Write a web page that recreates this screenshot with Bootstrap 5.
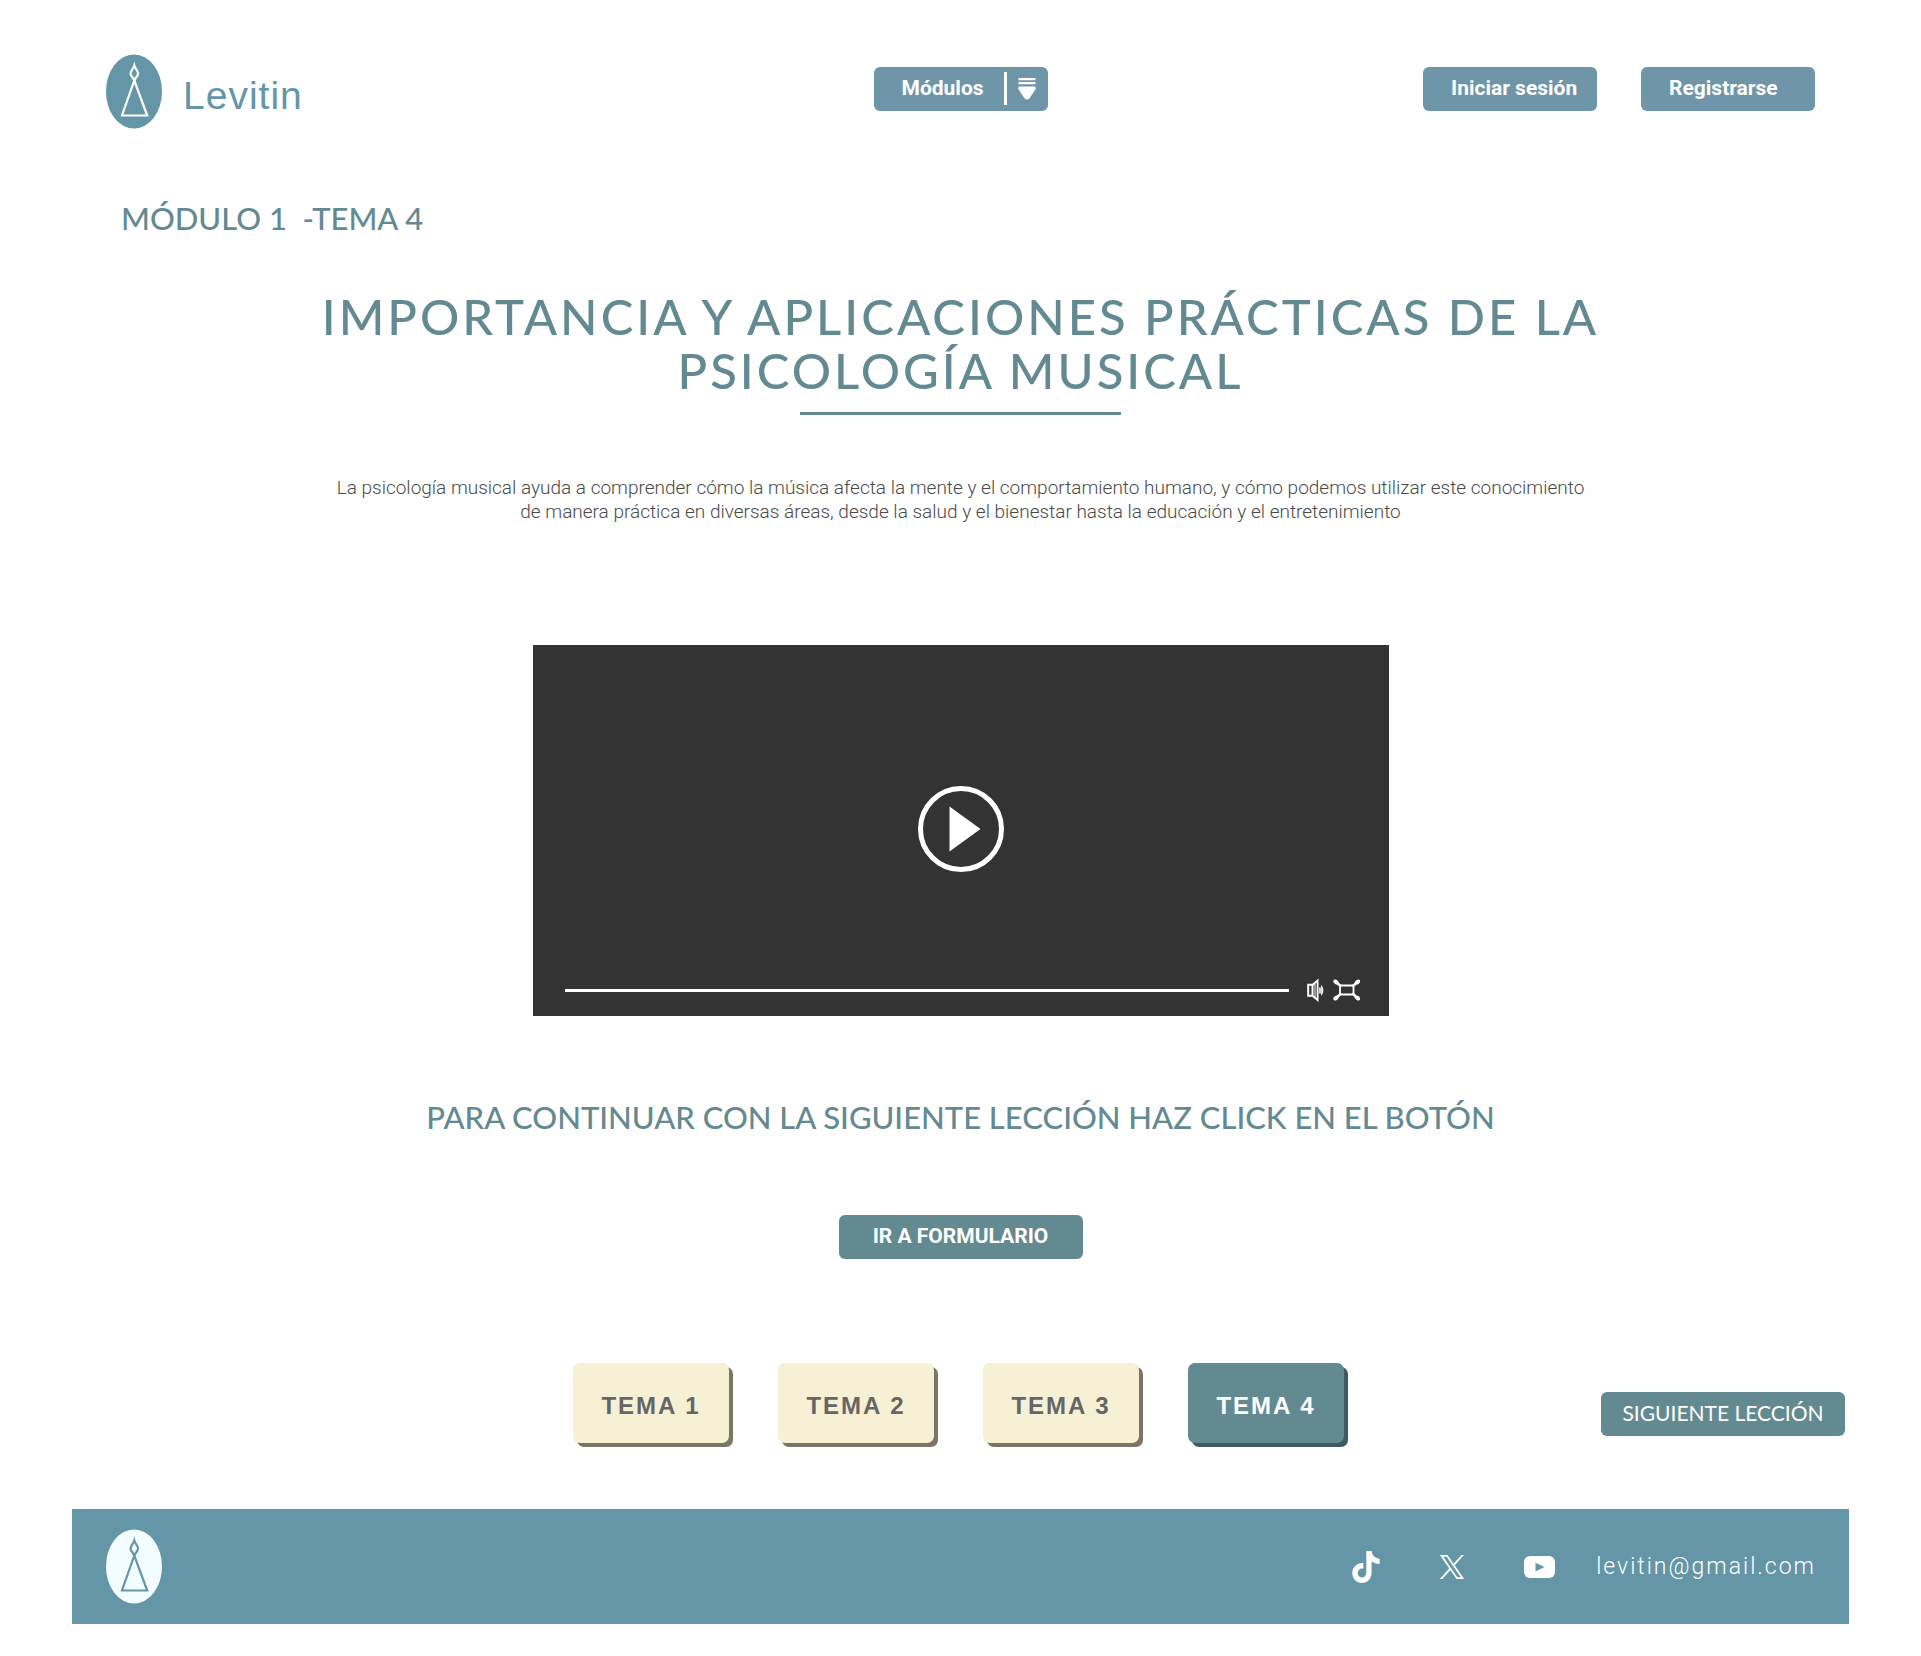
<!DOCTYPE html>
<html lang="es">
<head>
<meta charset="utf-8">
<meta name="viewport" content="width=device-width, initial-scale=1">
<title>Levitin</title>
<link href="https://cdn.jsdelivr.net/npm/bootstrap@5.3.0/dist/css/bootstrap.min.css" rel="stylesheet">
<style>
  :root { --teal: #648a91; --sky: #6496a8; --steel: #6e95a8; --cream: #f6f0d4; }
  body { background: #fefefe; font-family: Roboto, "Liberation Sans", sans-serif; font-size: 20px; line-height: 24px; color: #4a4a4a; }
  .site-head { display: grid; grid-template-columns: 1fr auto 1fr; align-items: center; padding: 54px 106px 0; }
  .logo-mark { width: 56px; height: 75px; flex: none; }
  .brand-name { font-family: "Liberation Sans", sans-serif; font-size: 39px; line-height: 48px; letter-spacing: 1px; color: var(--sky); padding-top: 8px; }
  .brand-link { gap: 21px; }
  .btn-site { --bs-btn-color: #fff; --bs-btn-hover-color: #fff; --bs-btn-bg: var(--steel); --bs-btn-hover-bg: #5e8699; --bs-btn-border-width: 0; --bs-btn-border-radius: 6px; --bs-btn-font-weight: 700; --bs-btn-font-size: 21px; --bs-btn-line-height: 24px; --bs-btn-padding-x: 0; --bs-btn-padding-y: 0; width: 174px; height: 44px; margin-bottom: 5px; padding-bottom: 2px; }
  .btn-head { padding-left: 28px; text-align: left; }
  .btn-teal { --bs-btn-bg: var(--teal); --bs-btn-hover-bg: #54797f; width: 244px; margin: 0; }
  .split-bar { width: 3px; height: 33px; background: #fff; margin: 0 8px 0 20px; }
  .geo { font-family: Lato, sans-serif; color: var(--teal); }
  .crumb { font-size: 31px; line-height: 40px; font-weight: 500; padding: 69px 121px 0; margin: 0; }
  .lesson-title { font-size: 49px; line-height: 54px; font-weight: 500; letter-spacing: 3px; max-width: 1400px; margin: 51px auto 0; }
  .title-rule { width: 321px; height: 3px; background: var(--teal); margin: 15px auto 0; }
  .intro { max-width: 1260px; margin: 61px auto 0; font-size: 19px; font-weight: 300; }
  .player { width: 856px; max-width: 100%; height: 371px; margin: 121px auto 0; background: #333; padding: 0 29px 14px 32px; }
  .stage { padding-top: 35px; }
  .play-btn { border: 0; background: none; padding: 0; margin-right: 3px; }
  .seek { appearance: none; flex: 1; min-width: 0; height: 3px; background: #fff; margin: 0 18px 0 0; }
  .seek::-webkit-slider-thumb { appearance: none; width: 3px; height: 3px; background: #fff; }
  .icon-btn { border: 0; background: none; padding: 0; display: flex; }
  .hint { font-size: 31px; line-height: 40px; font-weight: 500; margin: 81px 0 0; }
  .form-link { margin-top: 78px; }
  .topics { display: grid; grid-template-columns: 1fr auto 1fr; align-items: center; padding: 0 76px 0 72px; margin-top: 104px; }
  .topic-nav { gap: 49px; }
  .topic { width: 156px; height: 80px; border-radius: 7px; background: var(--cream); color: #666; box-shadow: 4px 4px 0 #7d7564; font-family: "Liberation Sans", sans-serif; font-size: 24px; font-weight: 700; letter-spacing: 2px; padding-top: 6px; text-decoration: none; }
  .topic.current { background: var(--teal); color: #fff; box-shadow: 4px 4px 0 #3f5a62; }
  .btn-next { --bs-btn-font-weight: 400; --bs-btn-font-size: 21px; font-family: Lato, sans-serif; margin-top: 22px; }
  .site-foot { background: var(--sky); margin: 66px 72px 0; height: 115px; padding: 0 33px 0 34px; }
  .social { gap: 60px; margin-right: 41px; }
  .mail { color: #fff; font-size: 23px; font-weight: 300; letter-spacing: 2px; text-decoration: none; }
</style>
</head>
<body>
<svg class="d-none" aria-hidden="true">
  <symbol id="candle" viewBox="0 0 56 75">
    <g fill="none" stroke="currentColor" stroke-width="2.2">
      <path d="M28.300 26.500 16 61.500H41.200Z"/>
      <path d="M28.300 11.500C27.500 14.500 24.500 17 24.500 19.500S28.300 25 28.300 27C28.300 25 32.100 22 32.100 19.500S29.100 14.500 28.300 11.500Z"/>
    </g>
  </symbol>
</svg>

<header class="site-head">
  <a href="#" class="brand-link d-flex align-items-center text-decoration-none">
    <svg class="logo-mark" viewBox="0 0 56 75" color="#fff" role="img" aria-label="Logo Levitin"><ellipse cx="28" cy="37.500" rx="28" ry="37" fill="#6496a8"/><use href="#candle"/></svg>
    <span class="brand-name">Levitin</span>
  </a>
  <button type="button" class="btn btn-site btn-head d-flex align-items-center">
    <span>Módulos</span>
    <span class="split-bar"></span>
    <svg width="24" height="24" viewBox="0 0 24 24" fill="#fff" aria-hidden="true"><path d="M3.500 2h17v2.200h-17zM3.500 6h17v2.200h-17zM4 10.400h16l1 2-6.500 9.800q-2.500 2.600-5 0L3 12.400z"/></svg>
  </button>
  <nav class="d-flex justify-content-end gap-4" aria-label="Cuenta">
    <button type="button" class="btn btn-site btn-head me-3">Iniciar sesión</button>
    <button type="button" class="btn btn-site btn-head ms-1">Registrarse</button>
  </nav>
</header>

<main>
  <p class="geo crumb">MÓDULO 1&nbsp; -TEMA 4</p>
  <h1 class="geo lesson-title text-center">IMPORTANCIA Y APLICACIONES PRÁCTICAS DE LA PSICOLOGÍA MUSICAL</h1>
  <div class="title-rule"></div>
  <p class="intro text-center">La psicología musical ayuda a comprender cómo la música afecta la mente y el comportamiento humano, y cómo podemos utilizar este conocimiento de manera práctica en diversas áreas, desde la salud y el bienestar hasta la educación y el entretenimiento</p>

  <section class="player d-flex flex-column" aria-label="Vídeo de la lección">
    <div class="stage flex-grow-1 d-flex align-items-center justify-content-center">
      <button type="button" class="play-btn" aria-label="Reproducir">
        <svg class="d-block" width="88" height="88" viewBox="0 0 88 88"><circle cx="44" cy="44" r="40.500" fill="none" stroke="#fff" stroke-width="5"/><path d="M32.500 21.500V66.500L63.500 44Z" fill="#fff"/></svg>
      </button>
    </div>
    <div class="d-flex align-items-center">
      <input type="range" class="seek" value="0" aria-label="Progreso">
      <button type="button" class="icon-btn me-2" aria-label="Volumen">
        <svg width="18" height="24" viewBox="0 0 18 24" fill="none" stroke="#fff"><path d="M1.200 6.800H5.500V17.800H1.200Z" stroke-width="2"/><path d="M5.500 7 10.600 2.500V22L5.500 17.800" stroke-width="1.800"/><path d="M8 6v13" stroke-width="1"/><path d="M13 9.500v6" stroke-width="1.600"/><path d="M14.500 7.500Q17.600 12.300 14.500 17.200Z" fill="#fff" stroke-width=".6"/></svg>
      </button>
      <button type="button" class="icon-btn" aria-label="Pantalla completa">
        <svg width="27" height="24" viewBox="0 0 27 24"><path d="M7 7.500H20.500V16.500H7Z" fill="none" stroke="#fff" stroke-width="1.800"/><g stroke="#fff" stroke-width="2.400" stroke-linecap="round"><path d="M3 4 7.500 8M24.500 4 20 8M3 20 7.500 16M24.500 20 20 16"/></g><g fill="#fff"><ellipse cx="3" cy="4" rx="3" ry="2" transform="rotate(35 3 4)"/><ellipse cx="24.500" cy="4" rx="3" ry="2" transform="rotate(-35 24.500 4)"/><ellipse cx="3" cy="20" rx="3" ry="2" transform="rotate(-35 3 20)"/><ellipse cx="24.500" cy="20" rx="3" ry="2" transform="rotate(35 24.500 20)"/></g></svg>
      </button>
    </div>
  </section>

  <p class="geo hint text-center">PARA CONTINUAR CON LA SIGUIENTE LECCIÓN HAZ CLICK EN EL BOTÓN</p>
  <div class="form-link text-center"><button type="button" class="btn btn-site btn-teal">IR A FORMULARIO</button></div>

  <div class="topics">
    <span></span>
    <nav class="topic-nav d-flex" aria-label="Temas">
      <a href="#" class="topic d-flex align-items-center justify-content-center">TEMA 1</a>
      <a href="#" class="topic d-flex align-items-center justify-content-center">TEMA 2</a>
      <a href="#" class="topic d-flex align-items-center justify-content-center">TEMA 3</a>
      <a href="#" class="topic current d-flex align-items-center justify-content-center" aria-current="page">TEMA 4</a>
    </nav>
    <div class="d-flex justify-content-end"><button type="button" class="btn btn-site btn-teal btn-next">SIGUIENTE LECCIÓN</button></div>
  </div>
</main>

<footer class="site-foot d-flex align-items-center">
  <svg class="logo-mark me-auto" viewBox="0 0 56 75" color="#6496a8" role="img" aria-label="Logo Levitin"><ellipse cx="28" cy="37.500" rx="28" ry="37" fill="#f3fcff"/><use href="#candle"/></svg>
  <div class="social d-flex align-items-center">
    <a href="#" class="d-flex" aria-label="TikTok"><svg width="28" height="32" viewBox="0 0 28 32" fill="#fff"><path d="M14.300 0h5.300c.4 4 3 7.200 8 7.700v5.200c-3 0-5.800-1-8-2.600v11.500c0 5.700-4 10.200-9.600 10.200S.3 27.700.3 22s4.500-10.300 11-10v5.600c-3.200-.6-5.600 1.500-5.600 4.400 0 2.700 1.900 4.600 4.300 4.600s4.300-1.900 4.300-5z"/></svg></a>
    <a href="#" class="d-flex" aria-label="X"><svg width="24" height="24" viewBox="0 0 24 24"><path d="M1.500.8H7L22.500 23.200H17Z" fill="none" stroke="#fff" stroke-width="1.700"/><path d="M21.800 0H23.500L14 10.800 13 9.700ZM10 12.800 11 14.100 2 24H.2Z" fill="#fff" stroke="#fff" stroke-width=".6"/></svg></a>
    <a href="#" class="d-flex" aria-label="YouTube"><svg width="31" height="22" viewBox="0 0 31 22"><rect width="31" height="22" rx="6" fill="#fff"/><path d="M11.500 6.800V15.400L20.500 11Z" fill="#6496a8"/></svg></a>
  </div>
  <a href="mailto:levitin@gmail.com" class="mail">levitin@gmail.com</a>
</footer>
<script src="https://cdn.jsdelivr.net/npm/bootstrap@5.3.0/dist/js/bootstrap.bundle.min.js"></script>
</body>
</html>
